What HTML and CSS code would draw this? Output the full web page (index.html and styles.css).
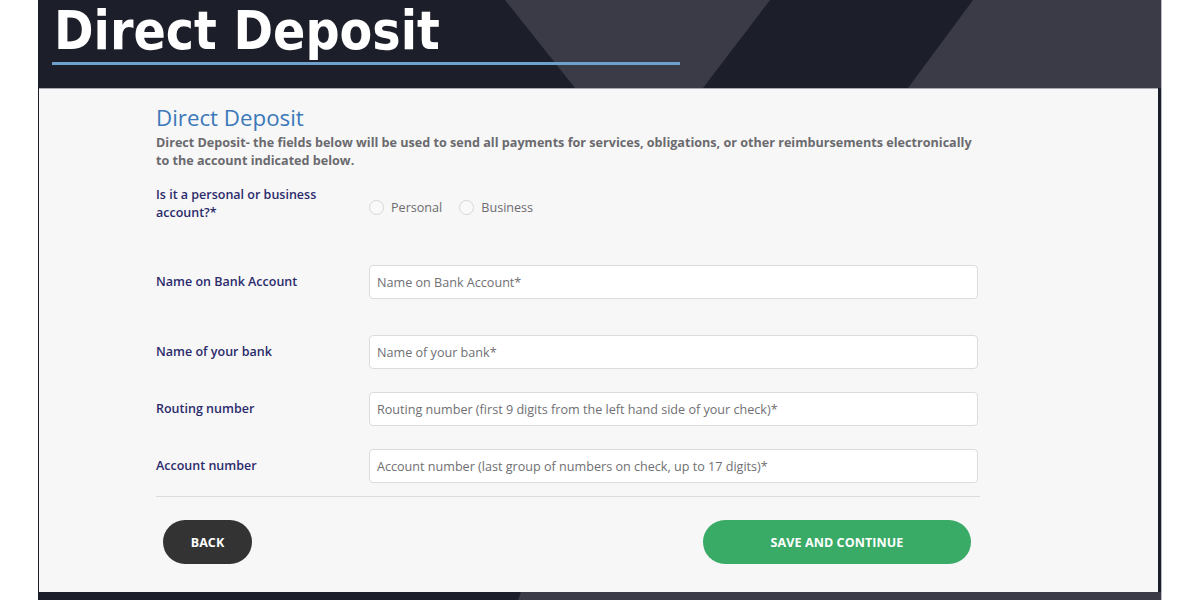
FILE: index.html
```html
<!DOCTYPE html>
<html lang="en">
<head>
<meta charset="utf-8">
<title>Direct Deposit</title>
<link rel="stylesheet" href="styles.css">
</head>
<body>
<div class="slide">
  <svg class="slide-bg" width="1124" height="600" viewBox="0 0 1124 600" aria-hidden="true">
    <rect x="0" y="0" width="1124" height="600" fill="#1c1e29"/>
    <polygon points="467,0 732,0 665,88 537,88" fill="#3a3b46"/>
    <polygon points="935,0 1124,0 1124,88 870,88" fill="#3a3b46"/>
    <polygon points="483,592 1124,592 1124,600 480,600" fill="#3a3b46"/>
  </svg>
  <header class="header">
    <h1 class="title">Direct Deposit</h1>
    <div class="rule"></div>
  </header>
  <main class="panel">
    <div class="content">
      <h2 class="heading">Direct Deposit</h2>
      <p class="desc">Direct Deposit- the fields below will be used to send all payments for services, obligations, or other reimbursements electronically to the account indicated below.</p>

      <div class="row row-radio">
        <div class="label">Is it a personal or business account?*</div>
        <div class="radios">
          <label class="radio"><span class="circle"></span>Personal</label>
          <label class="radio"><span class="circle"></span>Business</label>
        </div>
      </div>

      <div class="row row-1">
        <div class="label">Name on Bank Account</div>
        <div class="input">Name on Bank Account*</div>
      </div>
      <div class="row row-2">
        <div class="label">Name of your bank</div>
        <div class="input">Name of your bank*</div>
      </div>
      <div class="row row-3">
        <div class="label">Routing number</div>
        <div class="input">Routing number (first 9 digits from the left hand side of your check)*</div>
      </div>
      <div class="row row-4">
        <div class="label">Account number</div>
        <div class="input">Account number (last group of numbers on check, up to 17 digits)*</div>
      </div>

      <hr class="divider">

      <div class="actions">
        <button class="btn btn-back">BACK</button>
        <button class="btn btn-save">SAVE AND CONTINUE</button>
      </div>
    </div>
  </main>
</div>
</body>
</html>
```

FILE: styles.css
```css
* { box-sizing: border-box; }

html, body {
  margin: 0;
  padding: 0;
  background: #ffffff;
}

.slide {
  position: relative;
  margin-left: 38px;
  width: 1124px;
  height: 600px;
  overflow: hidden;
  border-right: 1px solid #b9bbc2;
}

.slide-bg {
  position: absolute;
  left: 0;
  top: 0;
  z-index: 0;
}

.header {
  position: relative;
  z-index: 1;
  height: 88px;
  padding-top: 0;
}

.title {
  margin: 0 0 0 16px;
  font-family: "DejaVu Sans Condensed", "DejaVu Sans", sans-serif;
  font-stretch: condensed;
  font-weight: 700;
  font-size: 53px;
  line-height: 62px;
  color: #ffffff;
}

.rule {
  margin: 0 0 0 14px;
  width: 628px;
  height: 3px;
  background: #6ea0cd;
}

.panel {
  position: relative;
  z-index: 1;
  margin-left: 1px;
  width: 1119px;
  height: 504px;
  background: #f7f7f7;
  border-top: 1px solid #a9abb3;
}

.content {
  margin-left: 117px;
  width: 824px;
  font-family: "Open Sans", "Liberation Sans", sans-serif;
}

.heading {
  margin: 0;
  padding-top: 15px;
  font-weight: 400;
  font-size: 22.3px;
  line-height: 28px;
  color: #3c79ba;
}

.desc {
  margin: 2px 0 0 0;
  font-weight: 700;
  font-size: 12.6px;
  line-height: 18px;
  color: #6a6a6e;
}

.row {
  display: flex;
  align-items: center;
}

.label {
  width: 213px;
  flex: none;
  padding-right: 50px;
  font-weight: 600;
  font-size: 12.5px;
  line-height: 18px;
  color: #2b2b6c;
}

.row-radio { margin-top: 16px; }
.row-radio .label { width: 213px; padding-right: 40px; }

.radios {
  display: flex;
  gap: 17px;
  padding-top: 6px;
}

.radio {
  display: flex;
  align-items: center;
  gap: 7px;
  font-size: 12.6px;
  color: #6c6c70;
}

.circle {
  width: 15px;
  height: 15px;
  border-radius: 50%;
  border: 1px solid #d6d6d8;
  background: #f9f9f9;
}

.input {
  flex: none;
  width: 609px;
  height: 34px;
  padding: 0 7px;
  display: flex;
  align-items: center;
  background: #ffffff;
  border: 1px solid #dcdcde;
  border-radius: 4px;
  font-size: 12.6px;
  color: #6f6f73;
}

.row-1 { margin-top: 43px; }
.row-2 { margin-top: 36px; }
.row-3 { margin-top: 23px; }
.row-4 { margin-top: 23px; }

.divider {
  margin: 13px 0 0 0;
  border: 0;
  border-top: 1px solid #dddddf;
  width: 824px;
}

.actions {
  display: flex;
  justify-content: space-between;
  margin-top: 23px;
  padding: 0 9px 0 7px;
}

.btn {
  height: 44px;
  border: 0;
  border-radius: 22px;
  font-family: "Open Sans", "Liberation Sans", sans-serif;
  font-weight: 700;
  font-size: 12.5px;
  color: #ffffff;
  letter-spacing: 0.1px;
}

.btn-back {
  width: 89px;
  background: #333333;
}

.btn-save {
  width: 268px;
  background: #3aaa67;
}
```
